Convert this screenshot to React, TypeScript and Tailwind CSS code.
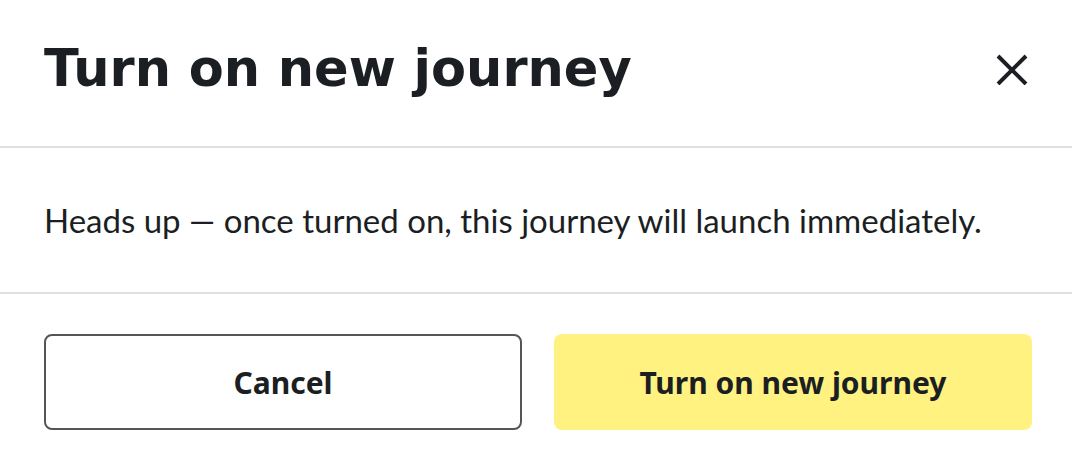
import { useId } from 'react';

const App = () => {
  const titleId = useId();

  return (
    <div
      role="dialog"
      aria-labelledby={titleId}
      className="w-full bg-white text-[#1b1f23] font-['Lato',sans-serif]"
    >
      <header className="flex items-center justify-between border-b-2 border-[#e0e0e0] pt-8 pb-10 px-11">
        <h1 id={titleId} className="text-[51px] leading-[74px] font-bold font-['DejaVu_Sans',sans-serif]">
          Turn on new journey
        </h1>
        <button type="button" aria-label="Close" className="cursor-pointer">
          <svg width="32" height="32" viewBox="0 0 32 32" fill="none" stroke="currentColor" strokeWidth="4">
            <path d="M2 3l28 28M30 3L2 31" />
          </svg>
        </button>
      </header>

      <p className="border-b-2 border-[#e0e0e0] px-11 py-12 text-[33px] leading-[48px]">
        Heads up — once turned on, this journey will launch immediately.
      </p>

      <footer className="grid grid-cols-2 gap-8 pt-10 pb-8 pl-11 pr-10 text-[30px] font-bold font-['Noto_Sans',sans-serif]">
        <button type="button" className="h-24 cursor-pointer rounded-lg border-2 border-[#555]">
          Cancel
        </button>
        <button type="button" className="h-24 cursor-pointer rounded-lg bg-[#fff280]">
          Turn on new journey
        </button>
      </footer>
    </div>
  );
};

export default App;
